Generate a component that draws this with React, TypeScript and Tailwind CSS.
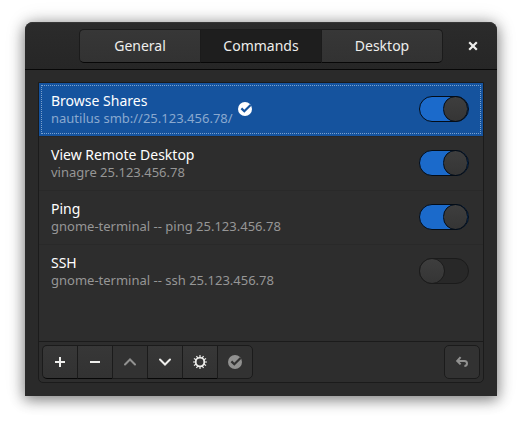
import { useId, useState } from 'react'
import clsx from 'clsx'

const TABS = ['General', 'Commands', 'Desktop']

const COMMANDS = [
  { id: 'browse', title: 'Browse Shares', command: 'nautilus smb://25.123.456.78/', enabled: true },
  { id: 'vinagre', title: 'View Remote Desktop', command: 'vinagre 25.123.456.78', enabled: true },
  { id: 'ping', title: 'Ping', command: 'gnome-terminal -- ping 25.123.456.78', enabled: true },
  { id: 'ssh', title: 'SSH', command: 'gnome-terminal -- ssh 25.123.456.78', enabled: false },
]

function CheckDisc() {
  const id = useId()
  return (
    <>
      <mask id={id}>
        <circle cx="8" cy="8" r="7" fill="#fff" />
        <path d="M4.4 7.4 7.3 10.3 13.6 4" fill="none" stroke="#000" strokeWidth="2.2" />
      </mask>
      <rect width="16" height="16" mask={`url(#${id})`} />
    </>
  )
}

const ICONS = {
  add: <path d="M7 3h2v4h4v2H9v4H7V9H3V7h4z" />,
  remove: <path d="M3 7h10v2H3z" />,
  up: <path d="M3 10.5 8 5.5l5 5" fill="none" stroke="currentColor" strokeWidth="2" strokeLinecap="round" />,
  down: <path d="M3 5.5l5 5 5-5" fill="none" stroke="currentColor" strokeWidth="2" strokeLinecap="round" />,
  gear: (
    <>
      <circle cx="8" cy="8" r="4.3" fill="none" stroke="currentColor" strokeWidth="1.8" />
      <path
        d="M8 1v2.5M8 12.5V15M1 8h2.5M12.5 8H15M4.5 1.94l1.2 2.1M10.3 11.96l1.2 2.1M1.94 4.5l2.1 1.2M11.96 10.3l2.1 1.2M1.94 11.5l2.1-1.2M11.96 5.7l2.1-1.2M4.5 14.06l1.2-2.1M10.3 4.04l1.2-2.1"
        stroke="currentColor"
        strokeWidth="1.2"
      />
    </>
  ),
  check: <CheckDisc />,
  revert: (
    <path
      d="M6.6 3.2 3.2 7l3.4 3.4M3.6 7H10.5a2.6 2.6 0 0 1 2.5 2.6c0 1.6-.9 2.4-2.6 2.4"
      fill="none"
      stroke="currentColor"
      strokeWidth="2"
    />
  ),
}

type IconName = keyof typeof ICONS

function Icon({ name }: { name: IconName }) {
  return (
    <svg viewBox="0 0 16 16" className="h-4 w-4 shrink-0" fill="currentColor" aria-hidden="true">
      {ICONS[name]}
    </svg>
  )
}

const TOOLS: { icon: IconName; label: string; disabled?: boolean }[] = [
  { icon: 'add', label: 'Add' },
  { icon: 'remove', label: 'Remove' },
  { icon: 'up', label: 'Move up', disabled: true },
  { icon: 'down', label: 'Move down' },
  { icon: 'gear', label: 'Edit' },
  { icon: 'check', label: 'Set default', disabled: true },
]

const toolClass =
  'flex h-[34px] items-center justify-center border border-[#1b1b1b] bg-linear-to-t from-[#323232] to-[#373737] text-[#eeeeec] border-b-[#070707] disabled:border-b-[#1b1b1b] disabled:bg-none disabled:bg-[#323232] disabled:text-[#919190]'

export default function App() {
  const [tab, setTab] = useState('Commands')
  const [selected, setSelected] = useState('browse')
  const [enabled, setEnabled] = useState(() => COMMANDS.filter((c) => c.enabled).map((c) => c.id))

  const toggle = (id: string) =>
    setEnabled((prev) => (prev.includes(id) ? prev.filter((x) => x !== id) : [...prev, id]))

  return (
    <div className="flex min-h-screen bg-white px-[25px] pt-[22px] pb-7 font-['Noto_Sans',sans-serif] text-[#eeeeec]">
      <main className="flex flex-1 flex-col rounded-t-lg bg-[#2a2a2a] shadow-[0_3px_14px_1px_rgba(0,0,0,0.45),0_0_22px_rgba(0,0,0,0.12)]">
        <header className="flex h-12 items-center rounded-t-lg border-t border-b border-t-[#373737] border-b-[#070707] bg-linear-to-t from-[#262626] to-[#2b2b2b] px-3">
          <div className="w-6" />
          <div role="tablist" className="mx-auto flex w-[364px]">
            {TABS.map((name) => (
              <button
                key={name}
                role="tab"
                aria-selected={tab === name}
                onClick={() => setTab(name)}
                className={clsx(
                  'h-[34px] flex-1 border-y border-l border-[#1b1b1b] border-b-[#070707] pb-0.5 text-[14px] first:rounded-l-[5px] last:rounded-r-[5px] last:border-r',
                  tab === name ? 'bg-[#1e1e1e]' : 'bg-linear-to-t from-[#323232] to-[#373737]'
                )}
              >
                {name}
              </button>
            ))}
          </div>
          <button aria-label="Close" className="flex h-6 w-6 items-center justify-center">
            <svg viewBox="0 0 16 16" className="h-4 w-4" aria-hidden="true">
              <path d="M4.2 4.2l7.6 7.6M11.8 4.2l-7.6 7.6" stroke="currentColor" strokeWidth="2.2" />
            </svg>
          </button>
        </header>

        <section className="mx-[13px] mt-3 mb-[13px] flex flex-1 flex-col rounded-b-[5px] border border-[#1b1b1b] bg-[#2d2d2d]">
          <ul className="flex-1">
            {COMMANDS.map((item) => (
              <li
                key={item.id}
                onClick={() => setSelected(item.id)}
                className={clsx(
                  'border-b p-0.5',
                  selected === item.id ? 'border-[#282828] bg-[#15539e]' : 'border-[#292929] last:border-transparent'
                )}
              >
                <div
                  className={clsx(
                    'flex h-[49px] items-center gap-1 border border-dotted pr-[11px] pb-px pl-[9px]',
                    selected === item.id ? 'border-[#7ba1cd]' : 'border-transparent'
                  )}
                >
                  <label htmlFor={item.id}>
                    <span className="block text-[14px] leading-[18px] text-white">{item.title}</span>
                    <span
                      className={clsx(
                        'block text-[13px] leading-4',
                        selected === item.id ? 'text-[#8aa9cf]' : 'text-[#969696]'
                      )}
                    >
                      {item.command}
                    </span>
                  </label>
                  {item.id === 'browse' && (
                    <span className="text-white">
                      <Icon name="check" />
                    </span>
                  )}
                  <input
                    id={item.id}
                    type="checkbox"
                    role="switch"
                    checked={enabled.includes(item.id)}
                    onChange={() => toggle(item.id)}
                    className="ml-auto flex h-[26px] w-[50px] appearance-none rounded-full border border-[#1b1b1b] bg-[#282828] before:-my-px before:-ml-px before:h-[26px] before:w-[26px] before:rounded-full before:border before:border-[#1b1b1b] before:bg-linear-to-t before:from-[#353535] before:to-[#3e3e3e] checked:border-[#030c17] checked:bg-[#1b6acb] checked:before:ml-[23px] checked:before:border-[#030c17]"
                  />
                </div>
              </li>
            ))}
          </ul>

          <div className="flex justify-between border-t border-[#1b1b1b] p-[3px]">
            <div role="toolbar" className="flex">
              {TOOLS.map((tool) => (
                <button
                  key={tool.icon}
                  aria-label={tool.label}
                  disabled={tool.disabled}
                  className={clsx(toolClass, 'w-9 not-first:-ml-px first:rounded-l-[5px] last:rounded-r-[5px]')}
                >
                  <Icon name={tool.icon} />
                </button>
              ))}
            </div>
            <button aria-label="Revert" disabled className={clsx(toolClass, 'w-9 rounded-[5px]')}>
              <Icon name="revert" />
            </button>
          </div>
        </section>
      </main>
    </div>
  )
}
